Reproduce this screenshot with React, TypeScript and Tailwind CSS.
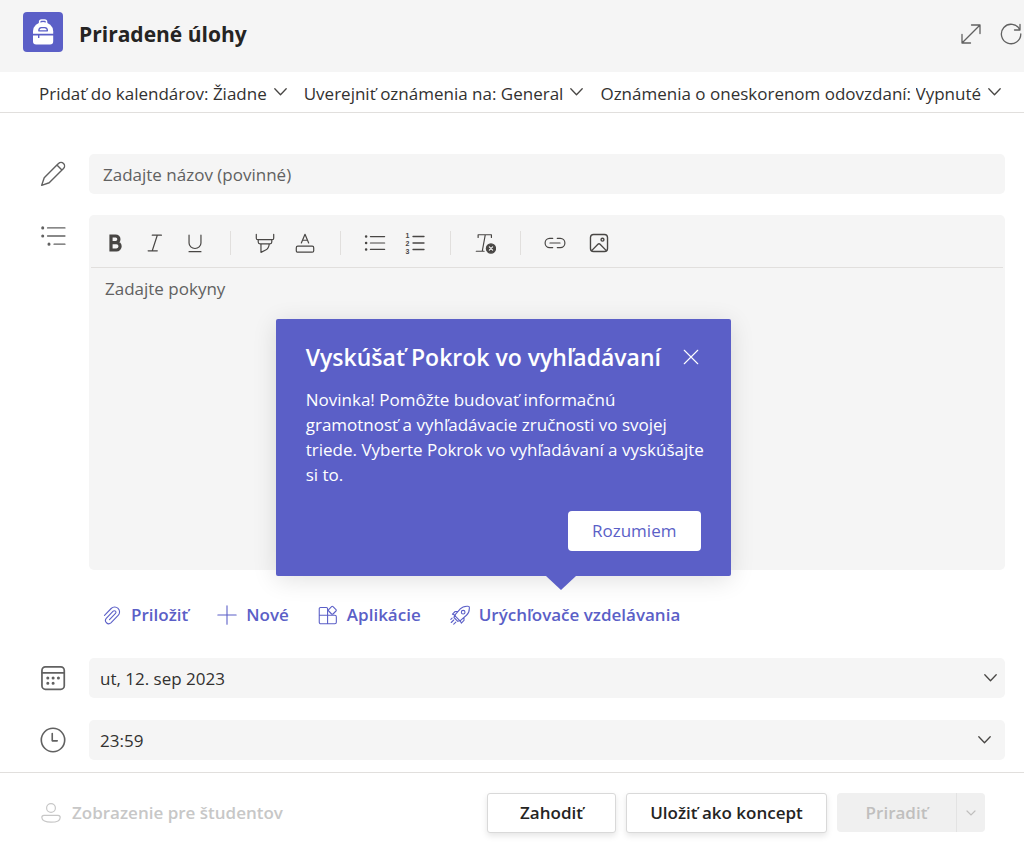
import { useState, type ReactNode } from 'react'

interface IconProps {
  size?: number
  className?: string
  sw?: number
  children: ReactNode
}

// Line icon on a 24 unit grid
function Icon({ size = 24, className = '', sw = 1.3, children }: IconProps) {
  return (
    <svg
      width={size}
      height={size}
      viewBox="0 0 24 24"
      fill="none"
      stroke="currentColor"
      strokeWidth={sw}
      strokeLinecap="round"
      strokeLinejoin="round"
      aria-hidden="true"
      className={`shrink-0 ${className}`}
    >
      {children}
    </svg>
  )
}

function Chevron({ className = '' }: { className?: string }) {
  return (
    <svg
      width="13"
      height="8"
      viewBox="0 0 13 8"
      fill="none"
      stroke="#484644"
      strokeWidth="1.3"
      strokeLinecap="round"
      strokeLinejoin="round"
      aria-hidden="true"
      className={`pointer-events-none shrink-0 ${className}`}
    >
      <path d="M0.8 0.8L6.5 6.8l5.700-6" />
    </svg>
  )
}

function BackpackLogo() {
  return (
    <svg width="40" height="40" viewBox="0 0 40 40" aria-hidden="true" className="shrink-0">
      <rect width="40" height="40" rx="4" fill="#5b5fc7" />
      <path d="M16.6 11V9.9a2 2 0 0 1 2-2h3a2 2 0 0 1 2 2V11" fill="none" stroke="#fff" strokeWidth="1.5" />
      <path d="M10 21.8v-2.6a10.1 9.2 0 0 1 20.2 0v2.6z" fill="#fff" />
      <path d="M10 23.4h5v2.5h1.4v-2.5h13.8v5.8a3.2 3.2 0 0 1-3.2 3.2H13.2a3.2 3.2 0 0 1-3.2-3.2z" fill="#fff" />
      <path d="M15.8 18.8c0-2.2 1-3.2 2.6-3.2h3.4c1.600 0 2.6 1 2.6 3.2z" fill="#fff" stroke="#5b5fc7" strokeWidth="1.3" strokeLinejoin="round" />
    </svg>
  )
}

const SETTINGS = [
  { id: 'kalendar', label: 'Pridať do kalendárov:', value: 'Žiadne' },
  { id: 'kanal', label: 'Uverejniť oznámenia na:', value: 'General' },
  { id: 'oneskorenie', label: 'Oznámenia o oneskorenom odovzdaní:', value: 'Vypnuté' },
]

function ToolButton({ label, className = '', children }: { label: string; className?: string; children: ReactNode }) {
  return (
    <button type="button" aria-label={label} className={`flex h-10 w-10 shrink-0 items-center justify-center text-[#484644] ${className}`}>
      {children}
    </button>
  )
}

function ToolDivider() {
  return (
    <div className="flex w-[30px] shrink-0 justify-center">
      <div className="h-6 w-px bg-[#e1dfdd]" />
    </div>
  )
}

function EditorToolbar() {
  return (
    <div className="mx-[2px] flex h-[53px] items-center border-b border-[#e1dfdd] pt-[3px] pl-1">
      <ToolButton label="Tučné">
        <Icon sw={3.2}>
          <path d="M8 5h4.6a3.2 3.2 0 0 1 0 6.6H8zM8 11.6h5.4a3.7 3.7 0 0 1 0 7.4H8z" strokeLinejoin="miter" />
        </Icon>
      </ToolButton>
      <ToolButton label="Kurzíva">
        <Icon size={22}>
          <path d="M9 3.500h10M4.500 20.5h10M14.5 3.5l-5.500 17" />
        </Icon>
      </ToolButton>
      <ToolButton label="Podčiarknuté">
        <Icon size={22}>
          <path d="M5.500 3.500v8.500a6.500 6 0 0 0 13 0V3.500M5.500 21.500h13" />
        </Icon>
      </ToolButton>
      <ToolDivider />
      <ToolButton label="Zvýrazniť">
        <Icon size={22}>
          <path d="M2.500 2.500v4.300a1.600 1.600 0 0 0 1.600 1.600h15.800a1.600 1.600 0 0 0 1.600-1.600V2.500M4.600 8.500v2.400a2 2 0 0 0 2 2h10.800a2 2 0 0 0 2-2V8.500M7.600 13v9.200l4.600-2.200c3.100-1.500 4.200-3.600 4.400-7" />
        </Icon>
      </ToolButton>
      <ToolButton label="Farba písma">
        <Icon size={22}>
          <path d="M8 12l4-9.500L16 12M9.400 9h5.200" />
          <rect x="2.500" y="15.500" width="19" height="6.500" rx="1.600" />
        </Icon>
      </ToolButton>
      <ToolDivider />
      <ToolButton label="Zoznam s odrážkami">
        <Icon size={22}>
          <path d="M7 5h15.500M7 12h15.500M7 19h15.500" />
          <path d="M2.300 5h.01M2.300 12h.01M2.300 19h.01" strokeWidth="2.800" />
        </Icon>
      </ToolButton>
      <ToolButton label="Číslovaný zoznam">
        <Icon>
          <path d="M10 5.500h11M10 12h11M10 18.500h11" />
          <g fill="currentColor" stroke="none" fontFamily="Liberation Sans, sans-serif" fontSize="7" fontWeight="700">
            <text x="2.500" y="6.500">1</text>
            <text x="2.500" y="14.600">2</text>
            <text x="2.500" y="22.700">3</text>
          </g>
        </Icon>
      </ToolButton>
      <ToolDivider />
      <ToolButton label="Vymazať formátovanie">
        <Icon size={22}>
          <path d="M4.500 6V3h14.500V6M12.300 3L9 21M2.500 21h8.500" />
          <circle cx="18.500" cy="18" r="5" fill="currentColor" />
          <path d="M16.700 16.200l3.600 3.600M20.300 16.200l-3.600 3.600" stroke="#f5f5f5" />
        </Icon>
      </ToolButton>
      <ToolDivider />
      <ToolButton label="Vložiť prepojenie">
        <Icon size={22}>
          <path d="M9.500 7H6.200a5 5 0 0 0 0 10h3.300M14.500 7h3.300a5 5 0 0 1 0 10h-3.300M6.500 12h11" />
        </Icon>
      </ToolButton>
      <ToolButton label="Vložiť obrázok" className="ml-1">
        <Icon size={22} sw={1.500}>
          <rect x="2.700" y="2.700" width="18.600" height="18.600" rx="3.400" />
          <circle cx="15.800" cy="8.400" r="1.600" />
          <path d="M4 20.300l6.800-6.900a1.700 1.700 0 0 1 2.400 0l6.800 6.900" />
        </Icon>
      </ToolButton>
    </div>
  )
}

function Teaching({ onClose }: { onClose: () => void }) {
  return (
    <div
      role="dialog"
      aria-labelledby="tip-title"
      className="absolute bottom-[59px] -left-[174px] z-10 w-[455px] rounded-[2px] bg-[#5b5fc7] px-[30px] pt-5 pb-[25px] text-white shadow-[0_4px_24px_rgba(0,0,0,0.12)]"
    >
      <div className="flex items-center justify-between">
        <h2 id="tip-title" className="text-[23px] leading-9 font-semibold whitespace-nowrap">
          Vyskúšať Pokrok vo vyhľadávaní
        </h2>
        <button type="button" aria-label="Zavrieť" onClick={onClose} className="flex w-5 justify-center">
          <Icon size={18} sw={1.500}>
            <path d="M3 3l18 18M21 3L3 21" />
          </Icon>
        </button>
      </div>
      <p className="mt-3 -mr-2 text-[17px] leading-[25px]">
        Novinka! Pomôžte budovať informačnú gramotnosť a vyhľadávacie zručnosti vo svojej triede. Vyberte Pokrok vo vyhľadávaní a vyskúšajte si to.
      </p>
      <div className="mt-6 flex justify-end">
        <button type="button" onClick={onClose} className="h-10 w-[133px] rounded-[4px] bg-white text-[17px] text-[#5b5fc7]">
          Rozumiem
        </button>
      </div>
      <svg width="30" height="15" viewBox="0 0 30 15" aria-hidden="true" className="absolute top-full left-[270px]">
        <path d="M0 0h30L15 14z" fill="#5b5fc7" />
      </svg>
    </div>
  )
}

const ACTION = 'flex h-10 items-center gap-[9px] font-semibold text-[#5b5fc7] whitespace-nowrap'

export default function App() {
  const [tipOpen, setTipOpen] = useState(true)

  return (
    <div className="flex min-h-screen flex-col overflow-x-hidden bg-white font-['Open_Sans','Noto_Sans',sans-serif] text-[17px] leading-6 text-[#323130]">
      {/* Header */}
      <header className="flex h-[72px] items-center bg-[#f5f5f5] pr-px pb-1 pl-[23px]">
        <div className="flex pb-1">
          <BackpackLogo />
        </div>
        <h1 className="ml-4 text-[21px] leading-8 font-bold text-[#252423]">Priradené úlohy</h1>
        <div className="ml-auto flex items-center gap-4 text-[#616161]">
          <button type="button" aria-label="Rozbaliť">
            <Icon>
              <path d="M3 21L21 3M12.500 3H21v8.500M3 12.500V21h8.500" />
            </Icon>
          </button>
          <button type="button" aria-label="Obnoviť">
            <Icon>
              <path d="M20.700 7.500A9.700 9.700 0 1 0 21.800 12M21 2.500v5.500h-5.500" />
            </Icon>
          </button>
        </div>
      </header>

      {/* Assignment settings */}
      <div className="flex h-[41px] items-center gap-[17px] border-b border-[#e1dfdd] pt-[3px] pl-[39px] whitespace-nowrap">
        {SETTINGS.map(s => (
          <div key={s.id} className="flex items-center">
            <label htmlFor={s.id}>{s.label}&nbsp;</label>
            <select id={s.id} className="field-sizing-content appearance-none bg-transparent">
              <option>{s.value}</option>
            </select>
            <Chevron className="mb-1 ml-[7px]" />
          </div>
        ))}
      </div>

      <main className="flex flex-1 flex-col pt-[41px] pr-[19px] pb-3 pl-10">
        <div className="flex items-center">
          <div className="w-[49px] shrink-0 text-[#616161]">
            <Icon size={26}>
              <path d="M15.600 3.800l1.500-1.500a3 3 0 0 1 4.600 4.600L8.500 20.100 1.500 22.500l2.400-7zM15.600 3.800l4.600 4.600" />
            </Icon>
          </div>
          <input
            aria-label="Názov"
            placeholder="Zadajte názov (povinné)"
            className="h-10 min-w-0 flex-1 rounded-[5px] bg-[#f5f5f5] px-[14px] outline-none placeholder:text-[#616161]"
          />
        </div>

        <div className="mt-[21px] flex flex-1">
          <div className="w-[49px] shrink-0 pt-2 text-[#616161]">
            <Icon size={26}>
              <path d="M7 4.500h16M7 12h16M13 19.500h10" />
              <path d="M2.500 4.500h.01M2.500 12h.01M8.300 19.500h.01" strokeWidth="2.800" />
            </Icon>
          </div>
          <div className="flex min-h-[355px] min-w-0 flex-1 flex-col rounded-[5px] bg-[#f5f5f5]">
            <EditorToolbar />
            <textarea
              aria-label="Pokyny"
              placeholder="Zadajte pokyny"
              className="w-full flex-1 resize-none px-4 pt-[9px] outline-none placeholder:text-[#616161]"
            />
          </div>
        </div>

        <div className="mt-[25px] flex gap-[29px] pl-[62px]">
          <button type="button" className={ACTION}>
            <Icon size={20}>
              <path d="M3 12.500l8-8.300a5.800 5.800 0 0 1 8.400 8.200l-8.700 9a3.900 3.900 0 0 1-5.600-5.400l8.300-8.600a1.900 1.900 0 0 1 2.800 2.700L9 17.500" />
            </Icon>
            Priložiť
          </button>
          <button type="button" className={ACTION}>
            <Icon size={20}>
              <path d="M12 1v22M1 12h22" />
            </Icon>
            Nové
          </button>
          <button type="button" className={ACTION}>
            <Icon size={20}>
              <path d="M11.500 12V4.500A1.500 1.500 0 0 0 10 3H3a1.500 1.500 0 0 0-1.500 1.500v16.200A1.800 1.800 0 0 0 3.300 22.500h16.900a1.800 1.800 0 0 0 1.800-1.800V14a1.800 1.800 0 0 0-1.800-1.800H1.500M11.500 12v10.500" />
              <path d="M16.300 1.900l-3.500 3.600a1.200 1.200 0 0 0 0 1.700l3.500 3.600a1.200 1.200 0 0 0 1.700 0l3.600-3.600a1.200 1.200 0 0 0 0-1.700L18 1.900a1.200 1.200 0 0 0-1.700 0z" />
            </Icon>
            Aplikácie
          </button>
          <div className="relative">
            <button type="button" className={ACTION}>
              <Icon size={20}>
                <path d="M5.500 12.500l6.800-7.800c2.300-2.600 6-3.500 9.600-3.200.8 0 1.300.5 1.300 1.300.2 3.600-.8 7.200-3.400 9.500L12 19zM9.500 7.800H6.200L3 11l3.400 1.400M16.800 15.200v3.300L13.600 21.700 12 18.600M5.500 12.500L4.800 15l4.500 4.600 2.700-.6M4.500 18L1.500 21M7 20.500L4.500 23M2.500 15.800L1 17.300" />
                <circle cx="15.800" cy="8.600" r="2.200" />
              </Icon>
              Urýchľovače vzdelávania
            </button>
            {tipOpen && <Teaching onClose={() => setTipOpen(false)} />}
          </div>
        </div>

        <div className="mt-[23px] flex items-center">
          <div className="w-[49px] shrink-0 text-[#616161]">
            <Icon size={26} sw={1.600}>
              <rect x="1.800" y="1.800" width="20.600" height="20.600" rx="3.200" />
              <path d="M2 7.200h20.200" />
              <path d="M7.200 12h.01M12.100 12h.01M17 12h.01M7.200 16.800h.01M12.100 16.800h.01" strokeWidth="2.800" />
            </Icon>
          </div>
          <div className="relative flex min-w-0 flex-1 items-center">
            <select aria-label="Termín odovzdania" className="h-10 w-full appearance-none rounded-[5px] bg-[#f5f5f5] px-[11px] pt-px">
              <option>ut, 12. sep 2023</option>
            </select>
            <Chevron className="absolute right-2" />
          </div>
        </div>

        <div className="mt-[22px] flex items-center">
          <div className="w-[49px] shrink-0 text-[#616161]">
            <Icon size={26} sw={1.500}>
              <circle cx="12" cy="12" r="10.800" />
              <path d="M11.300 6v6.800h4.600" />
            </Icon>
          </div>
          <div className="relative flex min-w-0 flex-1 items-center">
            <select aria-label="Čas odovzdania" className="h-10 w-full appearance-none rounded-[5px] bg-[#f5f5f5] px-[11px] pt-px">
              <option>23:59</option>
            </select>
            <Chevron className="absolute right-[14px]" />
          </div>
        </div>
      </main>

      {/* Footer */}
      <footer className="flex items-start border-t border-[#e1dfdd] pt-5 pr-[39px] pb-[14px] pl-10 font-semibold">
        <button type="button" disabled className="flex h-10 items-center gap-[10px] text-[#c7c7c7]">
          <Icon size={22}>
            <circle cx="12" cy="6.500" r="4.800" />
            <path d="M4.300 14.500h15.400a2.300 2.300 0 0 1 2.300 2.300c0 3.500-4.300 5.200-10 5.200S2 20.300 2 16.800a2.300 2.300 0 0 1 2.300-2.300z" />
          </Icon>
          Zobrazenie pre študentov
        </button>
        <div className="ml-auto flex gap-[10px] whitespace-nowrap text-[#252423]">
          <button type="button" className="h-10 w-[129px] rounded-[3px] border border-[#d9d9d9] bg-white shadow-[0_3px_6px_rgba(0,0,0,0.1)]">
            Zahodiť
          </button>
          <button type="button" className="h-10 w-[201px] rounded-[3px] border border-[#d9d9d9] bg-white shadow-[0_3px_6px_rgba(0,0,0,0.1)]">
            Uložiť ako koncept
          </button>
          <div className="flex h-[39px] text-[#c0bfbe]">
            <button type="button" disabled className="w-[119px] rounded-l-[4px] bg-[#f0f0f0]">
              Priradiť
            </button>
            <button type="button" disabled aria-label="Ďalšie možnosti" className="flex w-[29px] items-center justify-center rounded-r-[4px] border-l border-[#e3e3e3] bg-[#f0f0f0]">
              <svg width="10" height="6" viewBox="0 0 10 6" fill="none" stroke="currentColor" strokeWidth="1.2" strokeLinecap="round" aria-hidden="true">
                <path d="M1 1l4 4 4-4" />
              </svg>
            </button>
          </div>
        </div>
      </footer>
    </div>
  )
}
